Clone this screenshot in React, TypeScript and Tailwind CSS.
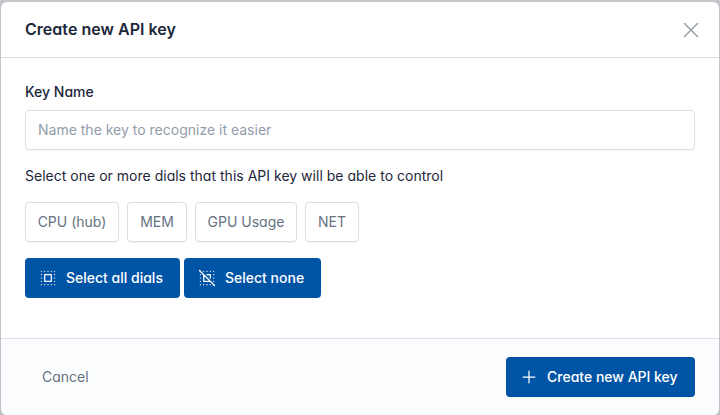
import React from "react";

type IconProps = { path: React.ReactNode; className?: string };

function Icon({ path, className = "" }: IconProps) {
  return (
    <svg viewBox="0 0 24 24" fill="none" stroke="currentColor" strokeWidth="1.5" strokeLinecap="round" strokeLinejoin="round" className={className}>
      {path}
    </svg>
  );
}

const dots = "M12 20v.01M16 20v.01M8 20v.01M4 20v.01M4 16v.01M4 12v.01M4 8v.01M4 4v.01M8 4v.01M12 4v.01M16 4v.01M20 4v.01M20 8v.01M20 12v.01M20 16v.01M20 20v.01";

const dials = [
  { name: "CPU (hub)", width: "w-[94px]" },
  { name: "MEM", width: "w-[60px]" },
  { name: "GPU Usage", width: "w-[102px]" },
  { name: "NET", width: "w-[54px]" },
];

function PrimaryButton({ icon, label, width }: { icon: React.ReactNode; label: string; width: string }) {
  return (
    <button className={`flex h-10 items-center whitespace-nowrap rounded bg-[#0054a6] pl-[13px] font-medium text-white ${width}`}>
      <Icon path={icon} className="mr-2 size-5 shrink-0" />
      {label}
    </button>
  );
}

export default function App() {
  return (
    <div className="h-[415px] w-[720px] bg-linear-to-b from-[#c2c6ca] to-[#bfc0ca] pl-px pr-px pt-0.5 font-['Inter',sans-serif] text-sm leading-5 text-[#1d273b] [font-feature-settings:'cv03','cv04','cv11']">
      <div className="flex h-full flex-col overflow-hidden rounded-md bg-white">
        <header className="flex h-14 shrink-0 items-center justify-between border-b border-[#dadfe5] pl-6 pr-4">
          <h1 className="pb-0.5 text-base font-semibold tracking-[0.002em]">Create new API key</h1>
          <button aria-label="Close" className="pt-px text-[#9a9fab]">
            <Icon path={<path d="M18.5 5.5l-13 13M5.5 5.5l13 13" />} className="size-6" />
          </button>
        </header>
        <main className="flex-1 px-6 pt-6">
          <label className="block font-medium">Key Name</label>
          <input placeholder="Name the key to recognize it easier" className="mt-2 block h-10 w-full rounded border border-[#dadfe5] px-3 pb-0.5 shadow-[0_1px_1px_rgba(29,39,59,0.05)] [font-feature-settings:normal] placeholder:text-[#929dab]" />
          <p className="mt-4 tracking-[0.001em]">Select one or more dials that this API key will be able to control</p>
          <div className="mt-4 flex gap-2">
            {dials.map((d) => (
              <button key={d.name} className={`h-10 whitespace-nowrap rounded border border-[#dadfe5] text-[#667382] shadow-[0_1px_1px_rgba(29,39,59,0.05)] ${d.width}`}>
                {d.name}
              </button>
            ))}
          </div>
          <div className="mt-4 flex gap-1">
            <PrimaryButton width="w-[155px]" label="Select all dials" icon={<><path d="M8 8h8v8H8z" /><path d={dots} /></>} />
            <PrimaryButton width="w-[137px]" label="Select none" icon={<><path d="M8 8v8h8M12 8h4v4M3 3l18 18" /><path d={dots} /></>} />
          </div>
        </main>
        <footer className="flex h-[77px] shrink-0 items-center justify-between border-t border-[#dadfe5] bg-[#fcfdfe] px-6">
          <button className="px-[17px] text-[#667382]">Cancel</button>
          <PrimaryButton width="w-[189px]" label="Create new API key" icon={<path d="M12 5v14M5 12h14" />} />
        </footer>
      </div>
    </div>
  );
}
